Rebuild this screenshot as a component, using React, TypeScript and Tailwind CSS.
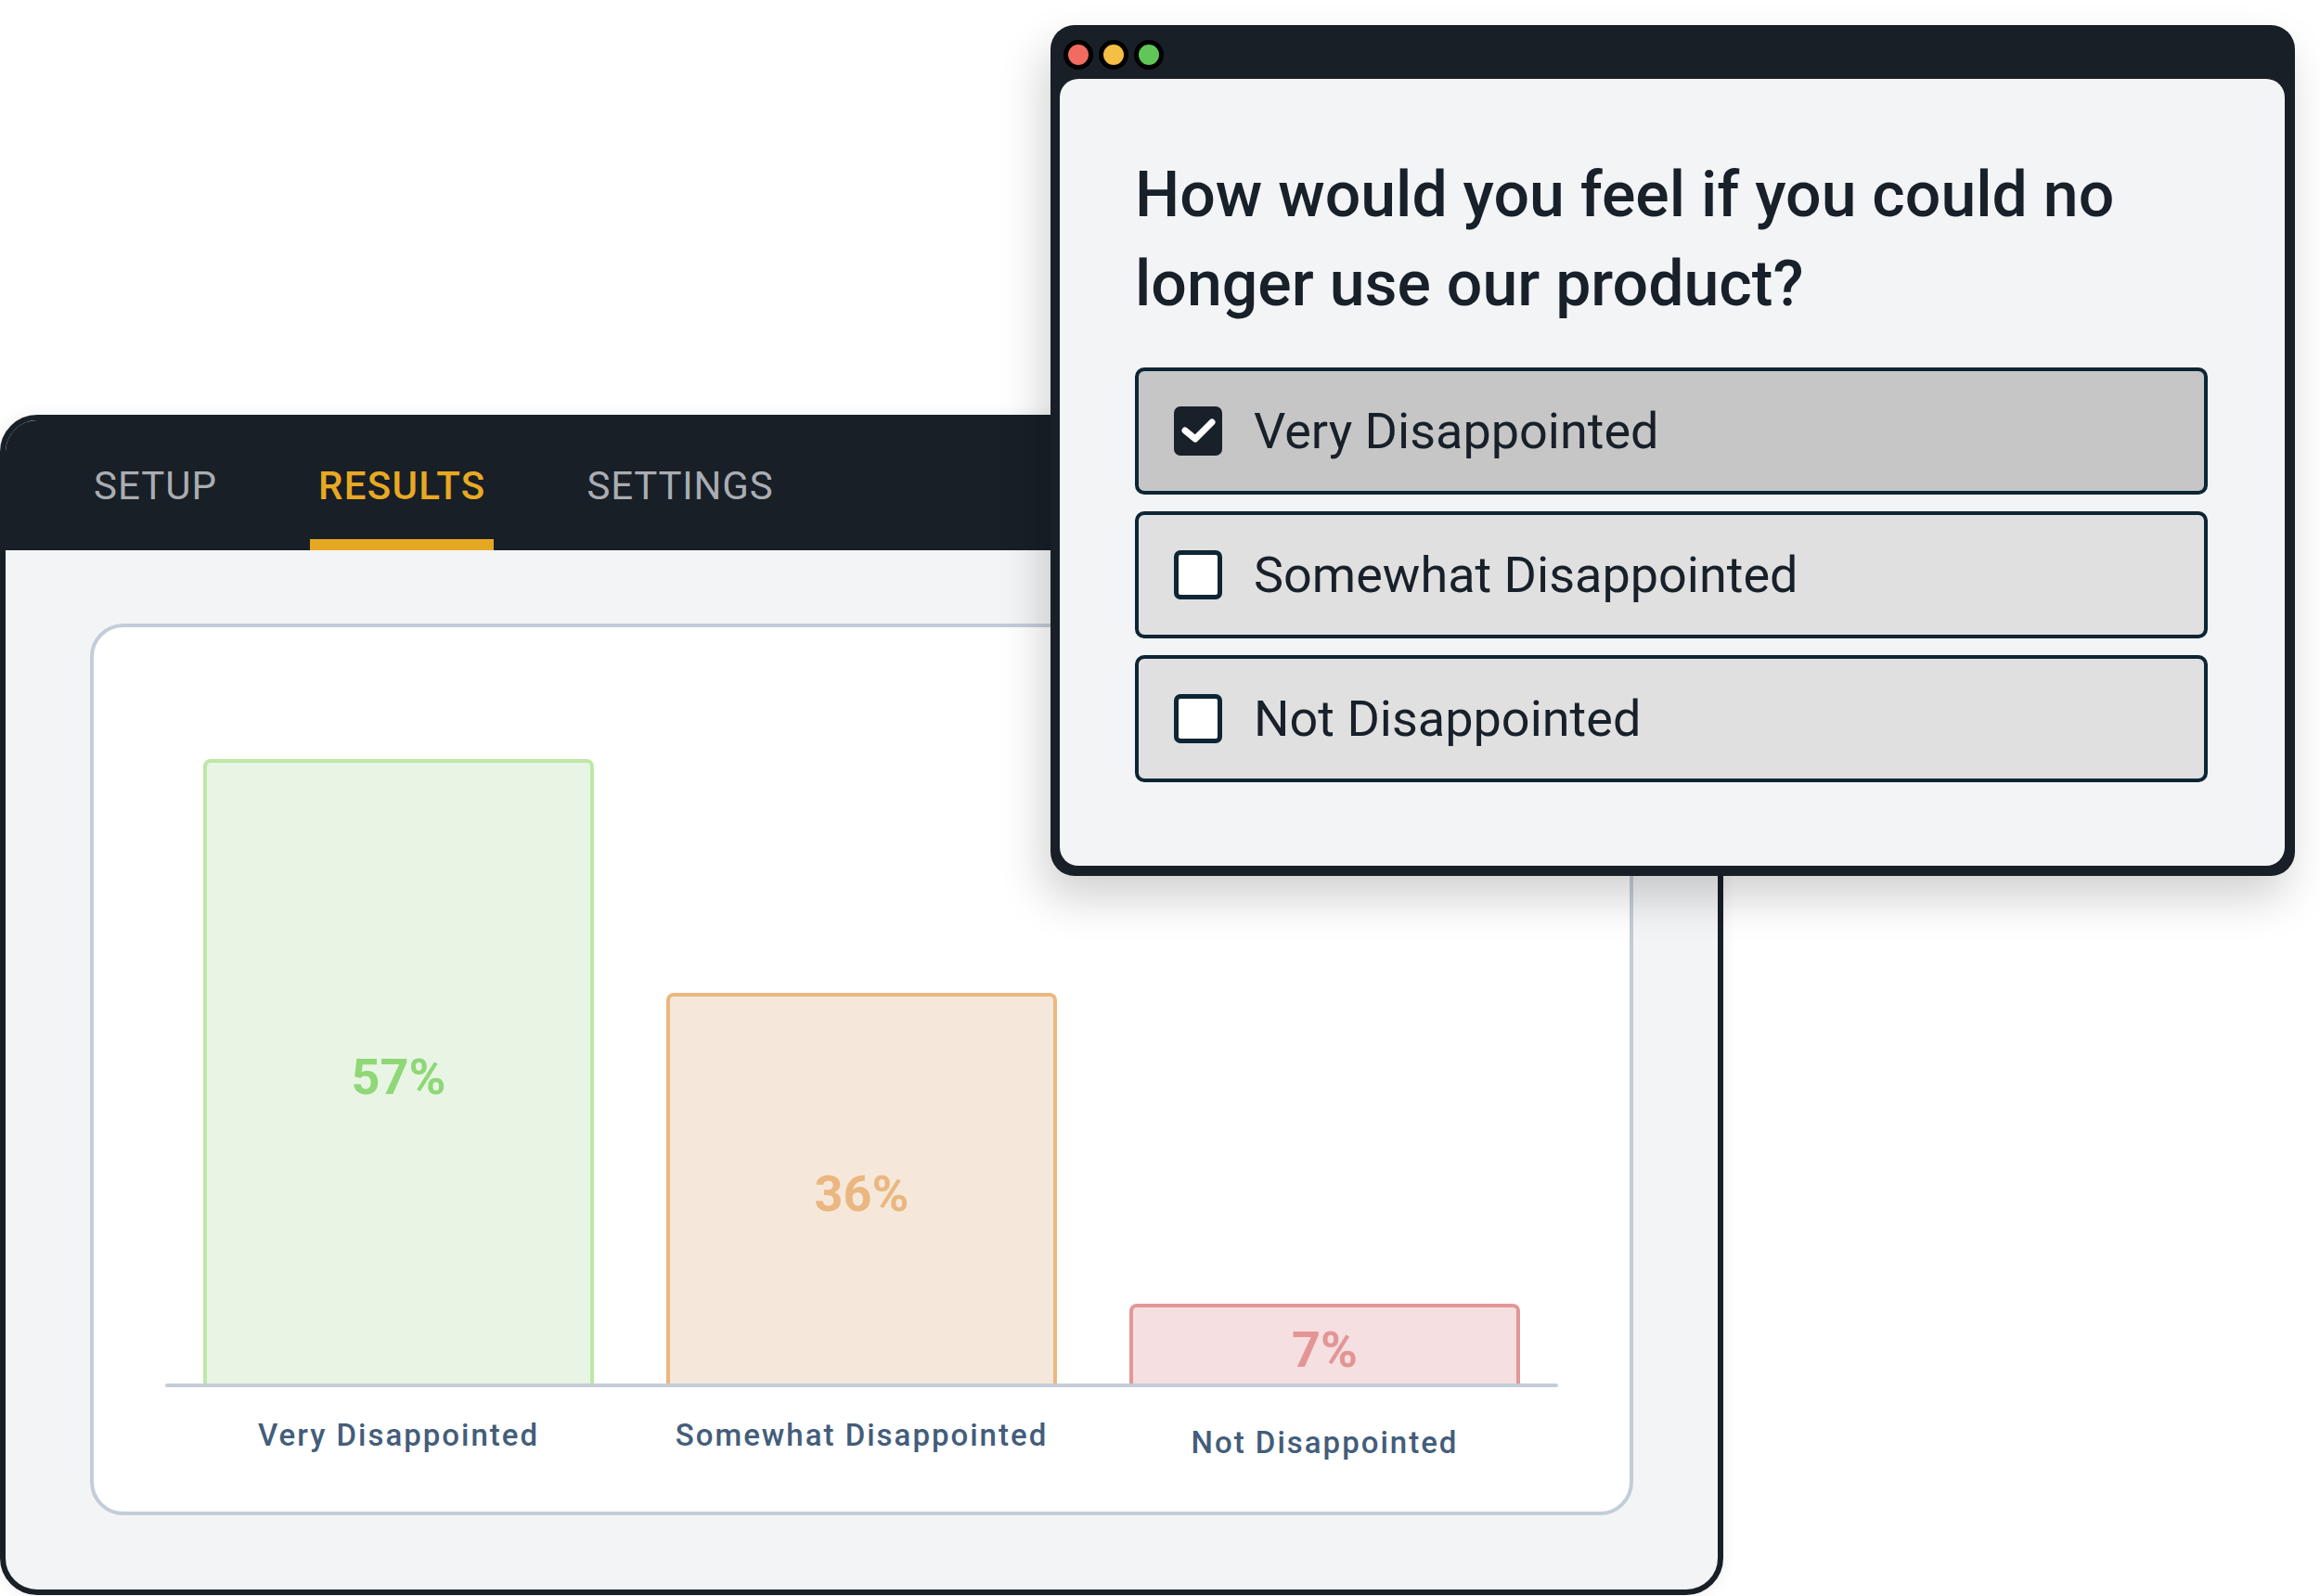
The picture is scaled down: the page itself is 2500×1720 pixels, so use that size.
import React from "react";

const bars = [
  { label: "Very Disappointed", pct: "57%", h: 673, border: "border-[#bde8a6]", fill: "bg-[#e9f5e4]", text: "text-[#8fd777]", extra: "" },
  { label: "Somewhat Disappointed", pct: "36%", h: 421, border: "border-[#ebb87f]", fill: "bg-[#f5e8da]", text: "text-[#ebb780]", extra: "" },
  { label: "Not Disappointed", pct: "7%", h: 86, border: "border-[#e39797]", fill: "bg-[#f5dfe0]", text: "text-[#e39595]", extra: "mt-[8px]" },
];

const options = [
  { label: "Very Disappointed", checked: true },
  { label: "Somewhat Disappointed", checked: false },
  { label: "Not Disappointed", checked: false },
];

function Checkbox({ checked }: { checked: boolean }) {
  if (checked) {
    return (
      <div className="w-[52px] h-[53px] rounded-[7px] bg-[#18202a] shrink-0">
        <svg width="52" height="53" viewBox="0 0 52 53">
          <polyline points="12,26 23,35 41,17" fill="none" stroke="#ffffff" strokeWidth="7" strokeLinecap="round" strokeLinejoin="round" />
        </svg>
      </div>
    );
  }
  return <div className="w-[52px] h-[53px] rounded-[7px] bg-white border-[5px] border-[#0d2535] shrink-0" />;
}

export default function App() {
  return (
    <div className="relative w-[2500px] h-[1720px] bg-white overflow-hidden" style={{ fontFamily: "Roboto, 'Noto Sans', sans-serif" }}>
      {/* Back window */}
      <div className="mt-[447px] w-[1857px] h-[1272px] flex flex-col border-[6px] border-[#181f27] rounded-[40px] overflow-hidden bg-[#f3f4f6] shadow-[0_0_16px_rgba(0,0,0,0.08)]">
        <div className="h-[140px] bg-[#181f27] flex items-stretch pl-[85px] gap-[90px] shrink-0">
          <div className="relative flex items-center px-[10px] text-[42px] tracking-[1px] text-[#a9adb2]">SETUP</div>
          <div className="relative flex items-center px-[9px] text-[42px] tracking-[1.3px] font-medium text-[#e8a922]">
            RESULTS
            <div className="absolute left-0 right-0 bottom-0 h-[12px] bg-[#e6a823]" />
          </div>
          <div className="relative flex items-center px-[10px] text-[42px] tracking-[0.8px] text-[#a9adb2]">SETTINGS</div>
        </div>
        <div className="flex-1 pl-[91px] pr-[91px] pt-[79px] pb-[80px]">
          <div className="h-full border-[4px] border-[#c3cdd9] rounded-[36px] bg-white pt-[142px] px-[77px]">
            <div className="h-[673px] flex items-end gap-[78px] px-[41px]">
              {bars.map((b) => (
                <div
                  key={b.label}
                  className={`flex-1 flex items-center justify-center pt-[9px] border-[4px] border-b-0 rounded-t-[8px] ${b.border} ${b.fill}`}
                  style={{ height: b.h }}
                >
                  <span className={`text-[54px] font-bold leading-none ${b.text}`}>{b.pct}</span>
                </div>
              ))}
            </div>
            <div className="h-[4px] bg-[#c3cdd9] rounded-full" />
            <div className="grid grid-cols-3 gap-[78px] px-[41px] mt-[33px]">
              {bars.map((b) => (
                <div key={b.label} className={`text-center text-[33px] font-medium tracking-[2px] text-[#435d7a] leading-[38px] ${b.extra}`}>
                  {b.label}
                </div>
              ))}
            </div>
          </div>
        </div>
      </div>

      {/* Front window */}
      <div className="absolute left-[1132px] top-[27px] w-[1341px] h-[917px] bg-[#181f27] rounded-[26px] flex flex-col shadow-[-8px_24px_48px_rgba(0,0,0,0.18)]">
        <div className="h-[58px] pt-[6px] pl-[14px] flex items-center gap-[6px] shrink-0">
          <div className="w-[32px] h-[32px] rounded-full border-[5px] border-black bg-[#f26b60]" />
          <div className="w-[32px] h-[32px] rounded-full border-[5px] border-black bg-[#f5be45]" />
          <div className="w-[32px] h-[32px] rounded-full border-[5px] border-black bg-[#60c657]" />
        </div>
        <div className="flex-1 ml-[10px] mr-[11px] mb-[11px] rounded-[20px] bg-[#f3f4f6] pl-[81px] pr-[83px] pt-[77px]">
          <h1 className="text-[68px] font-medium leading-[96px] text-[#18202a]">
            How would you feel if you could no longer use our product?
          </h1>
          <div className="mt-[42px] flex flex-col gap-[18px]">
            {options.map((o) => (
              <div
                key={o.label}
                className={`h-[137px] border-[4px] border-[#0d2535] rounded-[10px] flex items-center pl-[38px] gap-[34px] ${o.checked ? "bg-[#c6c6c6]" : "bg-[#e0e0e0]"}`}
              >
                <Checkbox checked={o.checked} />
                <span className="text-[54px] text-[#18202a] leading-none">{o.label}</span>
              </div>
            ))}
          </div>
        </div>
      </div>
    </div>
  );
}
